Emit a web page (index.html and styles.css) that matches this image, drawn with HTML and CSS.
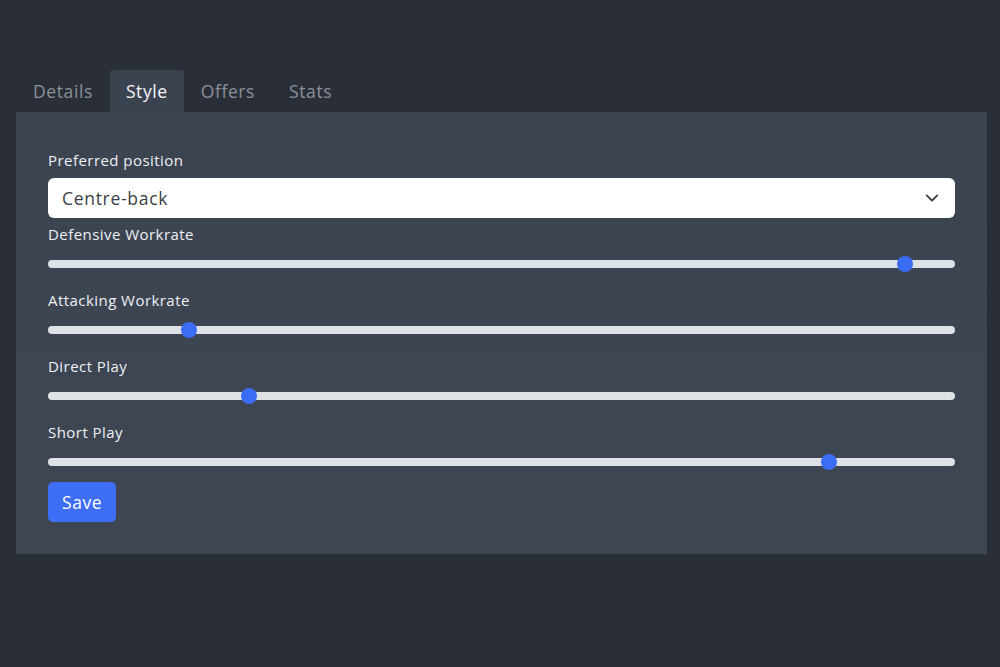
FILE: index.html
```html
<!DOCTYPE html>
<html lang="en">
<head>
<meta charset="utf-8">
<title>Player Style</title>
<link rel="stylesheet" href="styles.css">
</head>
<body>
<div class="wrap">
  <ul class="tabs">
    <li class="tab">Details</li>
    <li class="tab active">Style</li>
    <li class="tab">Offers</li>
    <li class="tab">Stats</li>
  </ul>
  <form class="panel">
    <label class="label first" for="pos">Preferred position</label>
    <div class="select-wrap">
      <select id="pos" class="select">
        <option>Centre-back</option>
      </select>
      <svg class="chev" width="14" height="14" viewBox="0 0 16 16"><path d="M2 5l6 6 6-6" fill="none" stroke="#343a40" stroke-width="2" stroke-linecap="round" stroke-linejoin="round"/></svg>
    </div>
    <div class="group">
      <label class="label">Defensive Workrate</label>
      <input class="range" type="range" min="0" max="100" step="any" value="95.3">
    </div>
    <div class="group">
      <label class="label">Attacking Workrate</label>
      <input class="range" type="range" min="0" max="100" step="any" value="14.9">
    </div>
    <div class="group">
      <label class="label">Direct Play</label>
      <input class="range" type="range" min="0" max="100" step="any" value="21.7">
    </div>
    <div class="group">
      <label class="label">Short Play</label>
      <input class="range" type="range" min="0" max="100" step="any" value="86.8">
    </div>
    <button type="button" class="btn">Save</button>
  </form>
</div>
</body>
</html>
```

FILE: styles.css
```css
html, body {
  margin: 0;
  height: 100%;
}
body {
  background: #2a2f37;
  font-family: "Open Sans", "Liberation Sans", sans-serif;
  color: #e9ecef;
}
.wrap {
  padding: 70px 13px 0 16px;
}
.tabs {
  display: flex;
  list-style: none;
  margin: 0;
  padding: 0;
}
.tab {
  height: 42px;
  line-height: 42px;
  padding: 0 17px;
  font-size: 17.5px;
  letter-spacing: 0.6px;
  color: #8b919a;
}
.tab.active {
  background: #3b4350;
  color: #f5f6f8;
  padding: 0 16px;
  border-radius: 3px 3px 0 0;
}
.panel {
  background: linear-gradient(180deg, #3c4452 0%, #3e4654 100%);
  padding: 36px 32px 32px;
  display: flex;
  flex-direction: column;
  align-items: flex-start;
}
.label {
  display: block;
  font-size: 15px;
  line-height: 24px;
  letter-spacing: 0.45px;
  color: #eef0f2;
}
.label.first {
  margin-bottom: 6px;
}
.select-wrap {
  position: relative;
  align-self: stretch;
  margin-bottom: 4px;
}
.select {
  display: block;
  width: 100%;
  height: 40px;
  appearance: none;
  -webkit-appearance: none;
  border: none;
  border-radius: 6px;
  background: #fff;
  padding: 0 14px;
  font-family: inherit;
  font-size: 17.5px;
  letter-spacing: 0.7px;
  color: #3a3f45;
}
.chev {
  position: absolute;
  right: 16px;
  top: 13px;
  pointer-events: none;
}
.group {
  align-self: stretch;
  display: flex;
  flex-direction: column;
  gap: 10px;
  margin-bottom: 16px;
}
.group:last-of-type {
  margin-bottom: 12px;
}
.range {
  -webkit-appearance: none;
  appearance: none;
  width: 100%;
  height: 16px;
  margin: 0;
  background: transparent;
}
.range::-webkit-slider-runnable-track {
  height: 8px;
  background: #dee2e6;
  border-radius: 4px;
}
.range::-webkit-slider-thumb {
  -webkit-appearance: none;
  width: 16px;
  height: 16px;
  margin-top: -4px;
  border-radius: 50%;
  background: #3a6cf4;
  border: none;
}
.btn {
  height: 40px;
  padding: 0 14px;
  border: none;
  border-radius: 5px;
  background: #3d6ef5;
  color: #fff;
  font-family: inherit;
  font-size: 17.5px;
  letter-spacing: 0.6px;
}
```
